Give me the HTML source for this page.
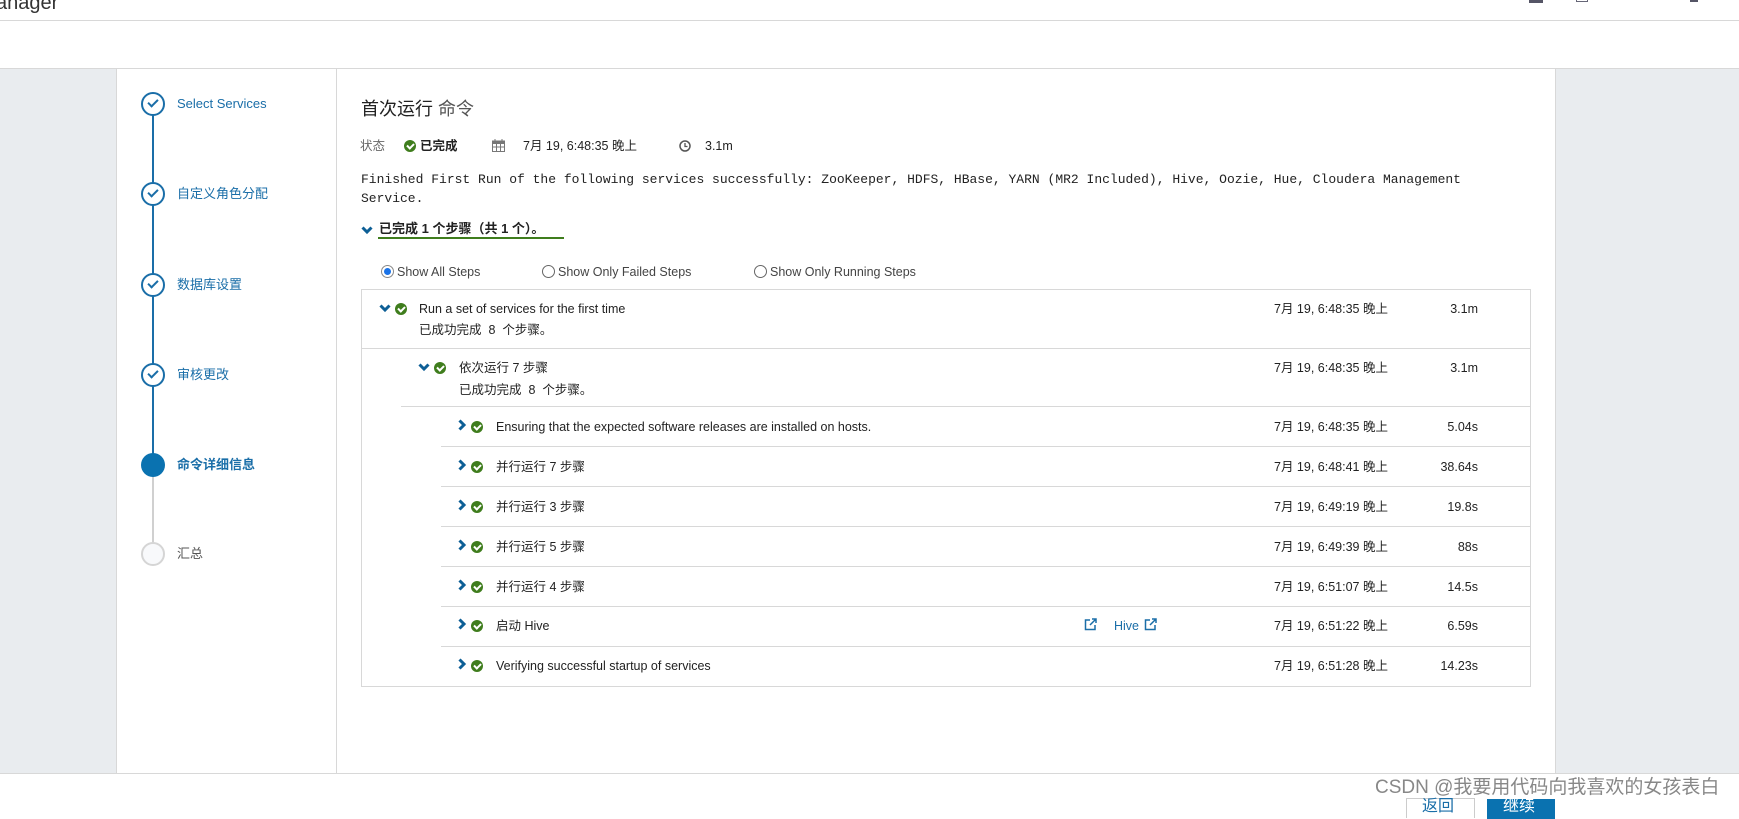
<!DOCTYPE html>
<html><head><meta charset="utf-8"><style>
*{margin:0;padding:0;box-sizing:border-box}
body{width:1739px;height:807px;overflow:hidden;background:#fff;font-family:"Liberation Sans","Noto Sans CJK SC",sans-serif;color:#222;position:relative}
.a{position:absolute;white-space:nowrap;line-height:16px}
.blue{color:#1a6ea8}
.ck{position:absolute;width:12px;height:12px;border-radius:50%;background:#3f7d1d}
.ck:after{content:"";position:absolute;left:3px;top:2.5px;width:5px;height:3px;border-left:2px solid #fff;border-bottom:2px solid #fff;transform:rotate(-45deg)}
.chd,.chr{position:absolute;width:12px;height:12px}
.step{position:absolute;left:141px;width:24px;height:24px;border-radius:50%;border:2px solid #1a6ea8;background:#fff}
.step:after{content:"";position:absolute;left:5px;top:5px;width:8px;height:4px;border-left:2.5px solid #1a6ea8;border-bottom:2.5px solid #1a6ea8;transform:rotate(-45deg)}
.sl{position:absolute;left:177px;font-size:13px;color:#1a6ea8;line-height:16px}
.t{font-size:12.5px}
.hl{position:absolute;height:1px;background:#d8d8d8}
</style></head><body>
<svg width="0" height="0" style="position:absolute"><defs>
<symbol id="d" viewBox="0 0 12 12"><path d="M1.5 3.5L6 8l4.5-4.5" fill="none" stroke="#0d5f96" stroke-width="3"/></symbol>
<symbol id="r" viewBox="0 0 12 12"><path d="M3.5 1.5L8 6l-4.5 4.5" fill="none" stroke="#0d5f96" stroke-width="3"/></symbol>
</defs></svg>
<div class="a" style="left:-4px;top:-8px;font-size:20px;color:#333;line-height:22px">anager</div>
<div class="a" style="left:1529px;top:-4px;width:14px;height:7px;background:#556"></div>
<div class="a" style="left:1576px;top:-4px;width:12px;height:6px;border:1.5px solid #667;border-top:none"></div>
<div class="a" style="left:1620px;top:-4px;width:20px;height:4px;border-bottom:1px solid #889"></div>
<div class="a" style="left:1690px;top:-4px;width:8px;height:6px;background:#556"></div>
<div class="hl" style="left:0;top:20px;width:1739px"></div>
<div class="hl" style="left:0;top:68px;width:1739px"></div>
<div class="a" style="left:0;top:69px;width:116px;height:704px;background:#e9ecef"></div>
<div class="a" style="left:116px;top:69px;width:1px;height:704px;background:#d8d8d8"></div>
<div class="a" style="left:336px;top:69px;width:1px;height:704px;background:#d8d8d8"></div>
<div class="a" style="left:1555px;top:69px;width:184px;height:704px;background:#e9ecef;border-left:1px solid #d8d8d8"></div>
<div class="hl" style="left:0;top:773px;width:1739px"></div>
<!-- sidebar -->
<div class="a" style="left:152px;top:104px;width:1.5px;height:361px;background:#1a6ea8"></div>
<div class="a" style="left:152px;top:465px;width:1.5px;height:90px;background:#d0d0d0"></div>
<div class="step" style="top:92px"></div><div class="sl" style="top:96px">Select Services</div>
<div class="step" style="top:182px"></div><div class="sl" style="top:186px">自定义角色分配</div>
<div class="step" style="top:273px"></div><div class="sl" style="top:277px">数据库设置</div>
<div class="step" style="top:363px"></div><div class="sl" style="top:367px">审核更改</div>
<div class="a" style="left:141px;top:453px;width:24px;height:24px;border-radius:50%;background:#0a72b0"></div><div class="sl" style="top:457px;font-weight:bold">命令详细信息</div>
<div class="a" style="left:141px;top:542px;width:24px;height:24px;border-radius:50%;border:2px solid #d5d5d5;background:#f8f9fb"></div><div class="sl" style="top:546px;color:#555">汇总</div>
<!-- main -->
<div class="a" style="left:361px;top:98px;font-size:18px;color:#222;line-height:22px">首次运行 <span style="color:#555">命令</span></div>
<div class="a t" style="left:360px;top:138px;color:#666">状态</div>
<div class="ck" style="left:404px;top:140px"></div>
<div class="a t" style="left:420px;top:138px;font-weight:bold">已完成</div>
<svg class="a" style="left:492px;top:139px" width="13" height="13"><rect x="0.5" y="2" width="12" height="10.5" fill="#fff" stroke="#777"/><rect x="0.5" y="2" width="12" height="3" fill="#777"/><path d="M3 0v3M10 0v3M1 8h11M4.5 5v7M8.5 5v7" stroke="#777"/></svg>
<div class="a t" style="left:523px;top:138px">7月 19, 6:48:35 晚上</div>
<svg class="a" style="left:679px;top:140px" width="12" height="12"><circle cx="6" cy="6" r="5" fill="none" stroke="#555" stroke-width="1.5"/><path d="M6 3v3.5h2.5" stroke="#555" fill="none" stroke-width="1.3"/></svg>
<div class="a t" style="left:705px;top:138px">3.1m</div>
<div class="a" style="left:361px;top:170px;font-family:'Liberation Mono',monospace;font-size:13px;line-height:19px">Finished First Run of the following services successfully: ZooKeeper, HDFS, HBase, YARN (MR2 Included), Hive, Oozie, Hue, Cloudera Management<br>Service.</div>
<svg class="chd" style="left:361px;top:224px"><use href="#d"/></svg>
<div class="a" style="left:379px;top:221px;font-size:13px;font-weight:bold">已完成 1 个步骤（共 1 个）。</div>
<div class="a" style="left:378px;top:237px;width:186px;height:2px;background:#3f7d1d"></div>
<div class="a" style="left:381px;top:265px;width:13px;height:13px;border-radius:50%;border:1px solid #888;background:#fff"><div style="position:absolute;left:2px;top:2px;width:7px;height:7px;border-radius:50%;background:#1a73e8"></div></div>
<div class="a t" style="left:397px;top:264px;color:#444">Show All Steps</div>
<div class="a" style="left:542px;top:265px;width:13px;height:13px;border-radius:50%;border:1px solid #666"></div>
<div class="a t" style="left:558px;top:264px;color:#444">Show Only Failed Steps</div>
<div class="a" style="left:754px;top:265px;width:13px;height:13px;border-radius:50%;border:1px solid #666"></div>
<div class="a t" style="left:770px;top:264px;color:#444">Show Only Running Steps</div>
<!-- table -->
<div class="a" style="left:361px;top:289px;width:1170px;height:398px;border:1px solid #d8d8d8"></div>
<div class="hl" style="left:362px;top:348px;width:1168px"></div>
<div class="hl" style="left:401px;top:406px;width:1129px"></div>
<div class="hl" style="left:441px;top:446px;width:1089px"></div>
<div class="hl" style="left:441px;top:486px;width:1089px"></div>
<div class="hl" style="left:441px;top:526px;width:1089px"></div>
<div class="hl" style="left:441px;top:566px;width:1089px"></div>
<div class="hl" style="left:441px;top:606px;width:1089px"></div>
<div class="hl" style="left:441px;top:646px;width:1089px"></div>

<svg class="chd" style="left:379px;top:302px"><use href="#d"/></svg><div class="ck" style="left:395px;top:303px"></div>
<div class="a t" style="left:419px;top:301px">Run a set of services for the first time</div>
<div class="a t" style="left:419px;top:322px">已成功完成&nbsp; 8&nbsp; 个步骤。</div>
<div class="a t" style="left:1274px;top:301px">7月 19, 6:48:35 晚上</div><div class="a t" style="left:1400px;width:78px;text-align:right;top:301px">3.1m</div>

<svg class="chd" style="left:418px;top:361px"><use href="#d"/></svg><div class="ck" style="left:434px;top:362px"></div>
<div class="a t" style="left:459px;top:360px">依次运行 7 步骤</div>
<div class="a t" style="left:459px;top:382px">已成功完成&nbsp; 8&nbsp; 个步骤。</div>
<div class="a t" style="left:1274px;top:360px">7月 19, 6:48:35 晚上</div><div class="a t" style="left:1400px;width:78px;text-align:right;top:360px">3.1m</div>

<svg class="chr" style="left:456px;top:419px"><use href="#r"/></svg><div class="ck" style="left:471px;top:421px"></div>
<div class="a t" style="left:496px;top:419px">Ensuring that the expected software releases are installed on hosts.</div>
<div class="a t" style="left:1274px;top:419px">7月 19, 6:48:35 晚上</div><div class="a t" style="left:1400px;width:78px;text-align:right;top:419px">5.04s</div>

<svg class="chr" style="left:456px;top:459px"><use href="#r"/></svg><div class="ck" style="left:471px;top:461px"></div>
<div class="a t" style="left:496px;top:459px">并行运行 7 步骤</div>
<div class="a t" style="left:1274px;top:459px">7月 19, 6:48:41 晚上</div><div class="a t" style="left:1400px;width:78px;text-align:right;top:459px">38.64s</div>

<svg class="chr" style="left:456px;top:499px"><use href="#r"/></svg><div class="ck" style="left:471px;top:501px"></div>
<div class="a t" style="left:496px;top:499px">并行运行 3 步骤</div>
<div class="a t" style="left:1274px;top:499px">7月 19, 6:49:19 晚上</div><div class="a t" style="left:1400px;width:78px;text-align:right;top:499px">19.8s</div>

<svg class="chr" style="left:456px;top:539px"><use href="#r"/></svg><div class="ck" style="left:471px;top:541px"></div>
<div class="a t" style="left:496px;top:539px">并行运行 5 步骤</div>
<div class="a t" style="left:1274px;top:539px">7月 19, 6:49:39 晚上</div><div class="a t" style="left:1400px;width:78px;text-align:right;top:539px">88s</div>

<svg class="chr" style="left:456px;top:579px"><use href="#r"/></svg><div class="ck" style="left:471px;top:581px"></div>
<div class="a t" style="left:496px;top:579px">并行运行 4 步骤</div>
<div class="a t" style="left:1274px;top:579px">7月 19, 6:51:07 晚上</div><div class="a t" style="left:1400px;width:78px;text-align:right;top:579px">14.5s</div>

<svg class="chr" style="left:456px;top:618px"><use href="#r"/></svg><div class="ck" style="left:471px;top:620px"></div>
<div class="a t" style="left:496px;top:618px">启动 Hive</div>
<svg class="a" style="left:1084px;top:618px" width="13" height="13"><path d="M6 2H1.5v9.5H11V7" fill="none" stroke="#1a6ea8" stroke-width="1.5"/><path d="M6 7l6-6M8 1h4v4" fill="none" stroke="#1a6ea8" stroke-width="1.5"/></svg>
<div class="a t blue" style="left:1114px;top:618px">Hive</div>
<svg class="a" style="left:1144px;top:618px" width="13" height="13"><path d="M6 2H1.5v9.5H11V7" fill="none" stroke="#1a6ea8" stroke-width="1.5"/><path d="M6 7l6-6M8 1h4v4" fill="none" stroke="#1a6ea8" stroke-width="1.5"/></svg>
<div class="a t" style="left:1274px;top:618px">7月 19, 6:51:22 晚上</div><div class="a t" style="left:1400px;width:78px;text-align:right;top:618px">6.59s</div>

<svg class="chr" style="left:456px;top:658px"><use href="#r"/></svg><div class="ck" style="left:471px;top:660px"></div>
<div class="a t" style="left:496px;top:658px">Verifying successful startup of services</div>
<div class="a t" style="left:1274px;top:658px">7月 19, 6:51:28 晚上</div><div class="a t" style="left:1400px;width:78px;text-align:right;top:658px">14.23s</div>
<!-- footer -->
<div class="a" style="left:1406px;top:798px;width:69px;height:20px;border:1px solid #ccc;border-bottom:none;background:#fff"></div>
<div class="a" style="left:1422px;top:799px;font-size:16px;color:#1a6ea8">返回</div>
<div class="a" style="left:1487px;top:799px;width:68px;height:20px;background:#0a72b0"></div>
<div class="a" style="left:1503px;top:799px;font-size:16px;color:#fff">继续</div>
<div class="a" style="left:1375px;top:777px;font-size:19px;color:#888;line-height:22px;text-shadow:0 0 2px #fff,0 0 2px #fff">CSDN @我要用代码向我喜欢的女孩表白</div>
</body></html>
